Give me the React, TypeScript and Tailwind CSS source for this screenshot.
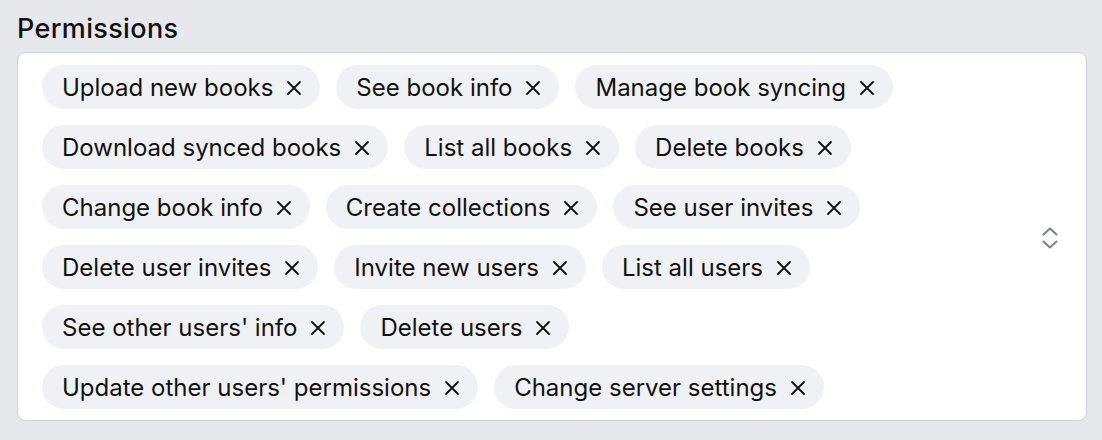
import React from "react";

const perms = [
  "Upload new books",
  "See book info",
  "Manage book syncing",
  "Download synced books",
  "List all books",
  "Delete books",
  "Change book info",
  "Create collections",
  "See user invites",
  "Delete user invites",
  "Invite new users",
  "List all users",
  "See other users' info",
  "Delete users",
  "Update other users' permissions",
  "Change server settings",
];

function XIcon() {
  return (
    <svg width="16" height="16" viewBox="0 0 16 16" fill="none" stroke="#111" strokeWidth="1.8" strokeLinecap="round">
      <path d="M2 2 L14 14 M14 2 L2 14" />
    </svg>
  );
}

function Chevrons() {
  return (
    <svg width="16" height="24" viewBox="0 0 16 24" fill="none" stroke="#7b8089" strokeWidth="2" strokeLinecap="round" strokeLinejoin="round">
      <path d="M1.5 8.5 L8 2.5 L14.5 8.5" />
      <path d="M1.5 15.5 L8 21.5 L14.5 15.5" />
    </svg>
  );
}

export default function App() {
  return (
    <div
      className="w-[1102px] h-[440px] bg-[#e7e8ec] pt-[13px] pl-[17px] pr-[15px]"
      style={{ fontFamily: "Inter, 'Noto Sans', sans-serif" }}
    >
      <div className="text-[27px] leading-[32px] text-[#111] font-medium tracking-[0.35px] mb-[7px]">Permissions</div>
      <div className="relative bg-white border border-[#cdd0d6] rounded-[8px] h-[369px] pt-[12px] pl-[24px] pr-[70px]">
        <div className="flex flex-wrap gap-x-[16px] gap-y-[16px]">
          {perms.map((p) => (
            <div
              key={p}
              className="flex items-center h-[44px] rounded-full bg-[#f0f1f4] pl-[20px] pr-[18px] text-[24px] text-[#111] whitespace-nowrap"
            >
              <span className="pt-[2px]">{p}</span>
              <span className="ml-[13px] flex items-center pt-[2px]">
                <XIcon />
              </span>
            </div>
          ))}
        </div>
        <div className="absolute right-[28px] top-1/2 -translate-y-1/2 mt-[1px]">
          <Chevrons />
        </div>
      </div>
    </div>
  );
}
